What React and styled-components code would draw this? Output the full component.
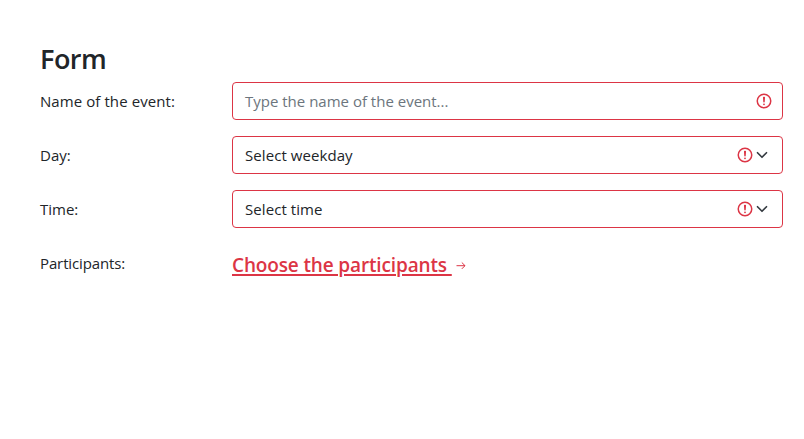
import React from "react";
import styled, { createGlobalStyle } from "styled-components";

const GlobalStyle = createGlobalStyle`
  *, *::before, *::after { box-sizing: border-box; }
  body {
    margin: 0;
    background: #fff;
    color: #212529;
    font-family: "Segoe UI", "Open Sans", "Noto Sans", sans-serif;
    font-size: 15px;
    line-height: 24px;
  }
`;

const Page = styled.main`
  padding: 42px 21px 0 40px;
`;

const Title = styled.h1`
  margin: 0 0 6px;
  font-size: 27px;
  font-weight: 600;
  line-height: 34px;
  letter-spacing: -0.5px;
`;

const Form = styled.form`
  display: grid;
  gap: 16px;
`;

const Row = styled.div`
  display: grid;
  grid-template-columns: 192px 1fr;
  align-items: center;
  height: 38px;
`;

const Label = styled.label`
  white-space: nowrap;
  letter-spacing: ${(p) => p.$tracking || "0"};
`;

const Control = styled.div`
  display: flex;
  align-items: center;
  height: 38px;
  padding: 0 ${(p) => (p.$select ? "12px" : "9px")} 0 12px;
  border: 1px solid #dc3545;
  border-radius: 4px;
`;

const Value = styled.span`
  flex: 1;
  white-space: nowrap;
  color: ${(p) => (p.$placeholder ? "#6c757d" : "#212529")};
  letter-spacing: ${(p) => p.$tracking || "0"};
`;

const Icon = styled.svg`
  display: block;
  flex: none;
`;

const Participants = styled.div`
  display: flex;
  align-items: center;
  padding-top: 4px;
  color: #dc3545;
`;

const Link = styled.a`
  margin-right: 4px;
  color: inherit;
  font-size: 19px;
  font-weight: 600;
  letter-spacing: -0.14px;
  white-space: pre;
  text-decoration: underline;
  text-decoration-thickness: 2px;
  text-underline-offset: 2px;
`;

const Alert = () => (
  <Icon width="18" height="18" viewBox="0 0 12 12" fill="none" stroke="#dc3545">
    <circle cx="6" cy="6" r="4.5" />
    <path strokeLinejoin="round" d="M5.8 3.6h.4L6 6.5z" />
    <circle cx="6" cy="8.2" r=".6" fill="#dc3545" stroke="none" />
  </Icon>
);

const Chevron = () => (
  <Icon width="16" height="12" viewBox="0 0 16 16" fill="none" stroke="#343a40">
    <path strokeLinecap="round" strokeLinejoin="round" strokeWidth="2.2" d="m2 5 6 6 6-6" />
  </Icon>
);

const Arrow = () => (
  <Icon width="10" height="10" viewBox="0 0 10 10" fill="none" stroke="#dc3545">
    <path d="M0.5 5.7h8.5M5.8 2.5l3.2 3.2-3.2 3.2" />
  </Icon>
);

export default function App() {
  return (
    <>
      <GlobalStyle />
      <Page>
        <Title>Form</Title>
        <Form>
          <Row>
            <Label $tracking="0.08px">Name of the event:</Label>
            <Control>
              <Value $placeholder>Type the name of the event...</Value>
              <Alert />
            </Control>
          </Row>
          <Row>
            <Label>Day:</Label>
            <Control $select>
              <Value $tracking="0.07px">Select weekday</Value>
              <Alert />
              <Chevron />
            </Control>
          </Row>
          <Row>
            <Label>Time:</Label>
            <Control $select>
              <Value $tracking="0.07px">Select time</Value>
              <Alert />
              <Chevron />
            </Control>
          </Row>
          <Row>
            <Label $tracking="-0.12px">Participants:</Label>
            <Participants>
              <Link href="#participants">{"Choose the participants "}</Link>
              <Arrow />
            </Participants>
          </Row>
        </Form>
      </Page>
    </>
  );
}
